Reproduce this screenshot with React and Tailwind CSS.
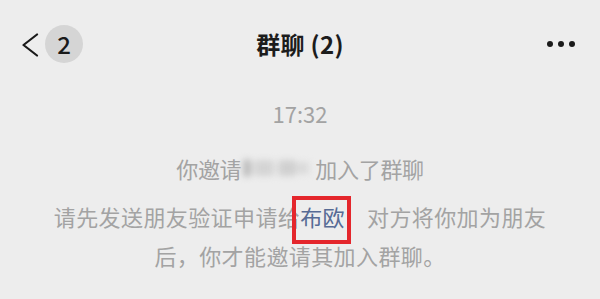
import React from "react";

export default function App() {
  const font = { fontFamily: '"Noto Sans CJK SC", "Noto Sans", sans-serif' };
  return (
    <div
      className="w-[600px] h-[299px] bg-[#ededed] overflow-hidden flex flex-col"
      style={font}
    >
      {/* Header */}
      <div className="h-[88px] grid grid-cols-[1fr_auto_1fr] items-center shrink-0">
        <div className="flex items-center pl-[22px]">
          <svg width="17" height="24" viewBox="0 0 17 24" className="mt-[2px]">
            <polyline
              points="15,1.5 1.5,12 15,22.5"
              fill="none"
              stroke="#1a1a1a"
              strokeWidth="2.2"
              strokeLinecap="round"
              strokeLinejoin="round"
            />
          </svg>
          <div className="ml-[6px] w-[38px] h-[38px] rounded-full bg-[#d5d5d5] flex items-center justify-center text-[24px] leading-none font-medium text-[#1a1a1a]">
            2
          </div>
        </div>
        <span className="text-[24px] leading-[30px] font-semibold text-[#1c1c1c] tracking-[0.3px]">
          群聊 (2)
        </span>
        <div className="flex items-center justify-end gap-[5px] pr-[25px]">
          <span className="w-[6px] h-[6px] rounded-full bg-[#1a1a1a]" />
          <span className="w-[6px] h-[6px] rounded-full bg-[#1a1a1a]" />
          <span className="w-[6px] h-[6px] rounded-full bg-[#1a1a1a]" />
        </div>
      </div>

      {/* Time */}
      <div className="mt-[10px] text-center text-[22px] leading-[30px] text-[#a3a3a3]">
        17:32
      </div>

      {/* Invite line */}
      <div className="mt-[25px] flex justify-center items-center text-[22px] leading-[30px] text-[#a3a3a3] tracking-[-0.3px]">
        <span>你邀请</span>
        <span className="w-[70px] h-[24px] mx-[2px] flex items-center blur-[3px]">
          <span className="w-[8px] h-[18px] bg-[#bdbdbd] rounded-sm" />
          <span className="w-[4px] h-[12px] bg-[#e2e2e2]" />
          <span className="w-[18px] h-[16px] bg-[#d4d4d4]" />
          <span className="w-[6px] h-[12px] bg-[#e4e4e4]" />
          <span className="w-[16px] h-[16px] bg-[#d0d0d0]" />
          <span className="w-[14px] h-[12px] bg-[#dadada]" />
        </span>
        <span>加入了群聊</span>
      </div>

      {/* Notice paragraph */}
      <div className="mt-[14px] text-center text-[22px] leading-[39px] text-[#a3a3a3] tracking-[0.4px] whitespace-nowrap">
        <div className="flex justify-center items-center">
          <span>请先发送朋友验证申请给</span>
          <span className="relative inline-block text-[#576b95]">
            布欧
            <span className="absolute left-[-8px] right-[-6px] top-[-1px] bottom-[-8px] border-[4px] border-[#e4262c]" />
          </span>
          <span className="inline-block w-[22px]" />
          <span>对方将你加为朋友</span>
        </div>
        <div>后，你才能邀请其加入群聊。</div>
      </div>
    </div>
  );
}
